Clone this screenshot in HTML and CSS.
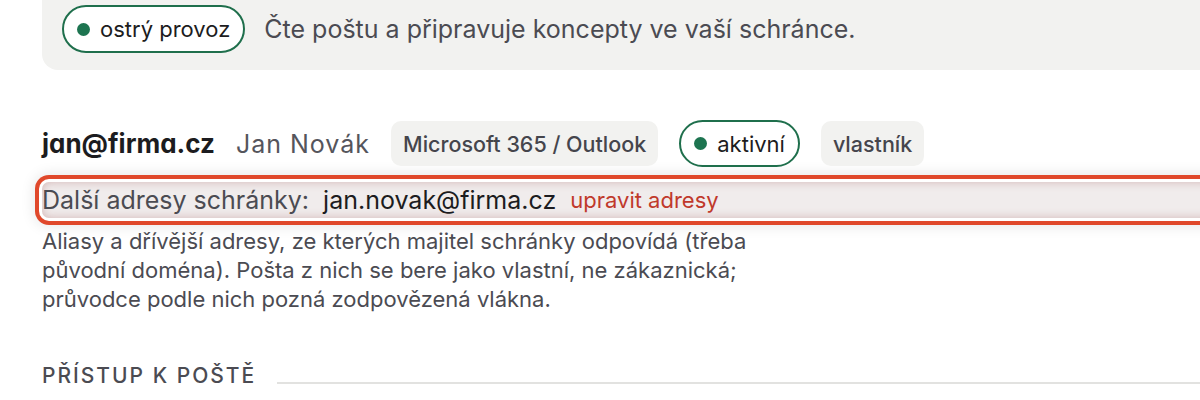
FILE: index.html
```html
<!DOCTYPE html>
<html lang="cs">
<head>
<meta charset="utf-8">
<title>Schránka</title>
<link rel="stylesheet" href="styles.css">
</head>
<body>
<main class="page">
  <section class="banner">
    <span class="status-pill"><span class="dot"></span>ostrý provoz</span>
    <span class="banner-text">Čte poštu a připravuje koncepty ve vaší schránce.</span>
  </section>

  <section class="mailbox">
    <div class="mailbox-head">
      <span class="address">jan@firma.cz</span>
      <span class="owner">Jan Novák</span>
      <span class="chip">Microsoft 365 / Outlook</span>
      <span class="status-pill small"><span class="dot"></span>aktivní</span>
      <span class="chip">vlastník</span>
    </div>
    <div class="aliases">
      <span class="aliases-label">Další adresy schránky:</span>
      <span class="aliases-value">jan.novak@firma.cz</span>
      <a class="aliases-edit" href="#">upravit adresy</a>
    </div>
    <p class="aliases-help">Aliasy a dřívější adresy, ze kterých majitel schránky odpovídá (třeba původní doména). Pošta z nich se bere jako vlastní, ne zákaznická; průvodce podle nich pozná zodpovězená vlákna.</p>
  </section>

  <h2 class="section-title"><span>Přístup k poště</span></h2>
</main>
</body>
</html>
```

FILE: styles.css
```css
html, body {
  margin: 0;
  padding: 0;
  background: #ffffff;
  overflow: hidden;
}
body {
  font-family: Inter, "Noto Sans", "DejaVu Sans", sans-serif;
  color: #1f1f24;
}
.page {
  margin-left: 42px;
  margin-right: -60px;
}
.banner {
  margin-top: -20px;
  padding: 25px 20px 17px 20px;
  background: #f2f2f0;
  border-radius: 16px;
  display: flex;
  align-items: center;
  gap: 19px;
}
.status-pill {
  display: inline-flex;
  align-items: center;
  gap: 10px;
  height: 48px;
  box-sizing: border-box;
  padding: 0 13px 0 13px;
  border: 2px solid #1f6f4c;
  border-radius: 999px;
  background: #ffffff;
  font-size: 22px;
  color: #1c1c20;
}
.status-pill .dot {
  width: 13px;
  height: 13px;
  border-radius: 50%;
  background: #1d7450;
}
.banner-text {
  font-size: 25px;
  color: #4b4b52;
}
.mailbox {
  margin-top: 50px;
}
.mailbox-head {
  display: flex;
  align-items: center;
  gap: 21px;
}
.address {
  font-size: 26px;
  font-weight: 700;
  color: #1c1c20;
  font-feature-settings: "cv11" 1;
}
.owner {
  font-size: 25px;
  letter-spacing: 1px;
  color: #55555c;
}
.chip {
  display: inline-flex;
  align-items: center;
  height: 45px;
  padding: 0 12px;
  border-radius: 10px;
  background: #f2f2f0;
  font-size: 21.5px;
  font-weight: 500;
  color: #45454c;
}
.status-pill.small {
  height: 47px;
  padding: 0 13px 0 13px;
}
.aliases {
  margin-top: 15px;
  height: 36px;
  display: flex;
  align-items: center;
  gap: 14px;
  border-radius: 7px;
  background: #f0ecec;
  box-shadow:
    inset 0 0 10px rgba(170, 100, 100, 0.4),
    0 0 0 3px #ffffff,
    0 0 0 7px #e0482b,
    0 0 14px 8px rgba(0, 0, 0, 0.10);
}
.aliases-label {
  font-size: 25px;
  color: #4b4b52;
}
.aliases-value {
  font-size: 25px;
  color: #1c1c20;
}
.aliases-edit {
  font-size: 22px;
  color: #c0392b;
  text-decoration: none;
}
.aliases-help {
  margin: 9px 0 0 0;
  max-width: 760px;
  font-size: 22px;
  line-height: 29px;
  color: #4b4b52;
}
.section-title {
  margin: 49px 0 0 0;
  display: flex;
  align-items: center;
  gap: 21px;
  font-size: 21px;
  font-weight: 500;
  letter-spacing: 2px;
  text-transform: uppercase;
  color: #4b4b52;
}
.section-title::after {
  content: "";
  flex: 1;
  height: 2px;
  background: #e2e2e0;
  margin-top: 14px;
}
```
